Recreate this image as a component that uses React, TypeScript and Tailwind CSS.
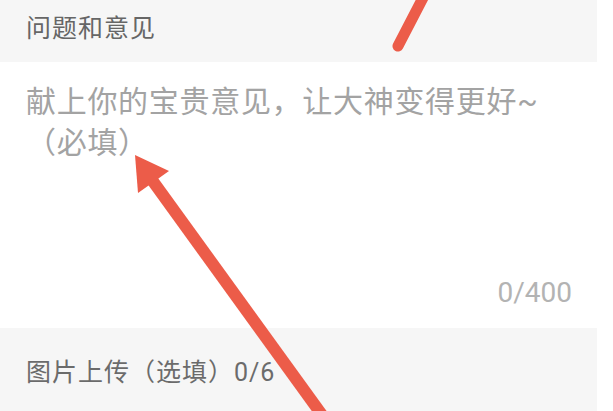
import React from "react";

const font = { fontFamily: '"Roboto", "Noto Sans CJK SC", sans-serif' };

function Arrows() {
  // red annotation strokes lying over the form
  return (
    <svg
      className="pointer-events-none absolute inset-0"
      width="613"
      height="411"
      viewBox="0 0 613 411"
    >
      <line
        x1="398"
        y1="46"
        x2="426"
        y2="-8"
        stroke="#ec5c49"
        strokeWidth="11"
        strokeLinecap="round"
      />
      <line
        x1="152"
        y1="180"
        x2="330"
        y2="426"
        stroke="#ec5c49"
        strokeWidth="12"
      />
      <polygon points="135,155 138,193 169,171" fill="#ec5c49" />
    </svg>
  );
}

export default function App() {
  return (
    <div
      className="relative flex h-[411px] w-[613px] flex-col overflow-hidden bg-white"
      style={font}
    >
      <div className="h-[62px] w-[597px] shrink-0 bg-[#f6f6f6] pl-[26px] pt-[14px]">
        <span className="text-[25px] leading-[30px] tracking-[1px] text-[#666666]">
          问题和意见
        </span>
      </div>

      <div className="flex h-[266px] shrink-0 flex-col justify-between pb-[18px] pl-[26px] pr-[41px] pt-[19px]">
        <div className="w-[535px] text-[30px] leading-[41px] tracking-[0.7px] text-[#a3a3a3]">
          献上你的宝贵意见，让大神变得更好~（必填）
        </div>
        <div className="text-right text-[28px] leading-[34px] text-[#b3b3b3]">
          0/400
        </div>
      </div>

      <div className="w-[597px] flex-1 bg-[#f6f6f6] pl-[26px] pt-[28px]">
        <span className="text-[25px] leading-[34px] tracking-[1px] text-[#6b6b6b]">
          图片上传（选填）0/6
        </span>
      </div>

      <Arrows />
    </div>
  );
}
